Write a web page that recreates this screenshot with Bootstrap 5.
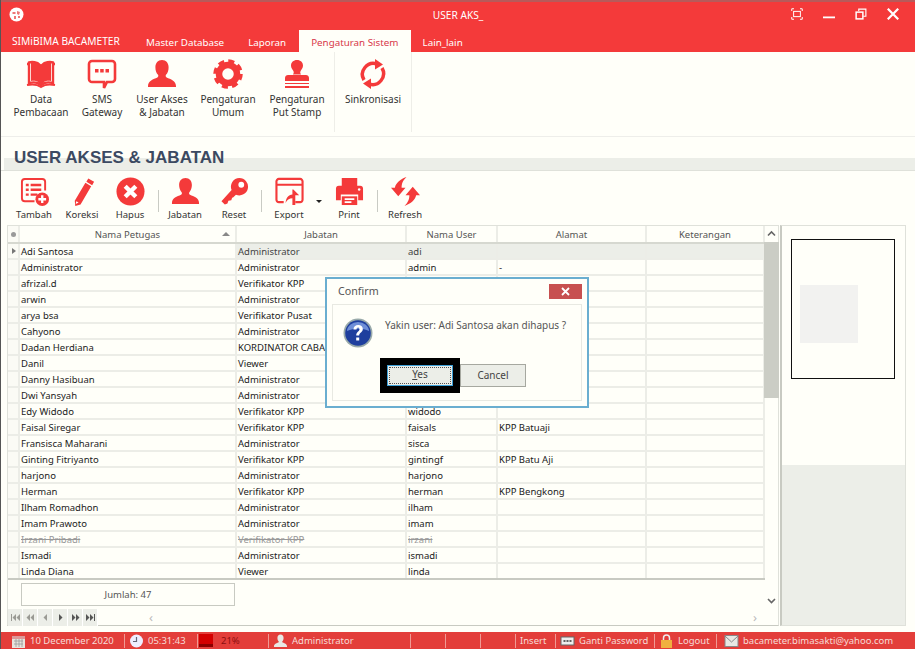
<!DOCTYPE html>
<html lang="en">
<head>
    <meta charset="UTF-8">
    <title>USER AKS_</title>
    <link href="https://cdn.jsdelivr.net/npm/bootstrap@5.3.2/dist/css/bootstrap.min.css" rel="stylesheet">
    <style>
        body { font-family: "Noto Sans", "Liberation Sans", sans-serif; font-size: 9.5px; color: #222; background: #fffff9; overflow: hidden; }
        .app { width: 915px; height: 649px; border-left: 1px solid #555; position: relative; }
        .ico { fill: #f43a3a; display: block; }
        /* title bar */
        .titlebar { height: 30px; background: #f43a3a; border-top: 2px solid #b85a5a; color: #fff; font-size: 10.2px; padding: 0 16px 4px 8px; }
        .win-title { position: absolute; left: 0; right: 0; top: 8px; text-align: center; }
        .winbtns { gap: 20px; }
        .winbtns svg { width: 12px; height: 12px; fill: none; stroke: #fff; }
        /* tabs */
        .tabstrip { height: 22px; background: #f43a3a; color: #fff; font-size: 9.8px; }
        .app-tab { width: 131px; padding: 4px 0 0 11px; height: 22px; font-size: 10.2px; }
        .rib-tab { padding: 6px 12px 0; height: 22px; }
        .rib-tab.first { margin-left: 2px; }
        .rib-tab.on { background: #fffff9; color: #d8384a; margin-left: 1px; }
        /* ribbon */
        .ribbon { height: 85px; border-bottom: 1px solid #eeeeea; }
        .rib-group { height: 80px; border-right: 1px solid #eeeee8; }
        .rib-main { width: 334px; }
        .rib-btn { width: 64px; padding-top: 7px; text-align: center; line-height: 13px; color: #333; font-size: 10px; }
        .rib-btn svg { width: 30px; height: 30px; margin: 0 auto 4px; }
        .rib-btn:nth-child(1) { width: 68px; margin-left: 6px; }
        .rib-btn:nth-child(2) { width: 54px; }
        .rib-btn:nth-child(3) { width: 66px; }
        .rib-btn:nth-child(4) { width: 66px; }
        .rib-btn:nth-child(5) { width: 72px; }
        .rib-btn.sync { width: 76px; margin-left: 0; }
        /* heading */
        .page-head { height: 33px; padding-top: 21px; position: relative; }
        .page-head-band { height: 12px; margin-left: 3px; background: #eceee8; }
        .page-head h1 { position: absolute; left: 13px; top: 11px; margin: 0; font: bold 17px "Liberation Sans", sans-serif; color: #3c4a62; }
        /* toolbar */
        .tools { height: 52px; padding: 6px 0 0 9px; border-top: 1px solid #dfe1da; }
        .tool { width: 48px; text-align: center; color: #333; line-height: 13px; }
        .tool svg { width: 29px; height: 29px; margin: 0 auto 2px; }
        .tool.t-jabatan { width: 52px; }
        .tool.t-reset { width: 46px; }
        .tool.t-export { width: 54px; }
        .tool.t-print { width: 54px; }
        .tool.t-refresh { width: 54px; }
        .tool-sep { width: 1px; height: 22px; background: #c9cbc4; margin: 13px 0 0 4px; }
        .tool-sep.tight { margin-left: 1px; }
        .tool-caret { width: 0; height: 0; border: 3px solid transparent; border-top-color: #222; border-bottom: 0; margin-top: 23px; }
        /* data grid */
        .work { height: 410px; padding: 3px 9px 6px 6px; }
        .grid-frame { width: 772px; border: 1px solid #dfe1da; border-bottom: 1px solid #c8cac2; }
        .grid-left { width: 756px; }
        .petugas { table-layout: fixed; width: 756px; margin: 0; border-collapse: collapse; }
        .petugas th, .petugas td { height: 16px; padding: 0 1px; font-weight: 400; white-space: nowrap; overflow: hidden; border-right: 2px solid #ecede7; border-bottom: 2px solid #ecede7; line-height: 13px; }
        .petugas th { height: 17px; text-align: center; color: #555; border-bottom: 2px solid #d6d8d0; position: relative; }
        .petugas tr:last-child td { border-bottom: 2px solid #c8cac2; }
        .petugas .c-sel { width: 11px; padding: 0; background: #fbfbf5; }
        .petugas .c-nama { width: 217px; }
        .petugas .c-jab { width: 170px; }
        .petugas .c-user { width: 91px; }
        .petugas .c-alamat { width: 149px; }
        .petugas .c-ket { width: 118px; }
        .petugas .cur td:not(.c-sel):not(:nth-child(2)) { background: #eceee8; color: #444; }
        .petugas .off td { color: #999; text-decoration: line-through; }
        .sort-up { position: absolute; right: 5px; top: 6px; width: 0; height: 0; border: 4px solid transparent; border-bottom: 4px solid #888; border-top: 0; }
        .sel-dot { width: 5px; height: 5px; border-radius: 50%; background: #999; margin: 0 auto; }
        .row-arrow { width: 0; height: 0; border: 3px solid transparent; border-left: 4px solid #777; border-right: 0; margin: 0 0 0 4px; }
        .sum-box { width: 214px; height: 23px; margin: 3px 0 0 13px; border: 1px solid #c8cac2; text-align: center; line-height: 21px; color: #555; }
        .pager { height: 17px; margin-top: 3px; }
        .pager-btn { width: 15px; height: 17px; background: #eceee8; border-right: 1px solid #fff; }
        .pager-btn svg { width: 15px; height: 17px; display: block; fill: #9a9a94; }
        .pager-btn.live svg { fill: #555; }
        .chev { color: #bbb; font-size: 13px; line-height: 15px; padding: 0 7px 0 51px; }
        .vbar { width: 15px; }
        .vbar-btn { height: 16px; }
        .vbar-btn svg, .vbar-low svg { width: 15px; height: 16px; display: block; fill: none; stroke: #666; stroke-width: 1.6; }
        .vbar-thumb { height: 156px; background: #cbcdc5; }
        .vbar-low { margin-top: 195px; }
        /* right side */
        .side-panel { width: 126px; margin-left: 1px; border: 1px solid #dfe1da; border-left: 2px solid #c8cac2; }
        .side-top { height: 239px; padding: 13px 0 0 9px; }
        .photo-box { width: 104px; height: 140px; border: 1px solid #111; padding: 45px 0 0 8px; }
        .photo-blank { width: 58px; height: 58px; background: #f2f2f0; }
        .side-low { background: #eceee8; }
        /* status bar */
        .statusbar { height: 17px; background: #e33e3a; color: #f6dcd8; display: grid; grid-template-columns: 124px 73px 71px 142px 35px 35px 35px 40px 99px 62px 1fr; }
        .stat { border-right: 1px solid #f09a94; height: 14px; margin-top: 2px; padding-left: 10px; line-height: 13px; gap: 4px; white-space: nowrap; }
        .stat:last-child { border: 0; padding-left: 7px; }
        .stat svg { width: 15px; height: 14px; flex: none; }
        .meter { width: 14px; height: 13px; background: #d40000; border-bottom: 3px solid #8c0000; margin-left: -9px; margin-right: 4px; }
        .meter-txt { color: #8c1010; }
        /* confirm dialog */
        .confirm { position: absolute; left: 324px; top: 277px; width: 264px; height: 131px; background: #fffff9; border: 2px solid #6aaed0; border-radius: 0; padding: 0 5px 5px 5px; }
        .confirm-head { height: 25px; padding-left: 6px; color: #555; font-size: 10.7px; }
        .confirm-x { width: 33px; height: 15px; margin-top: 5px; background: #c75050; }
        .confirm-x svg { width: 33px; height: 15px; display: block; stroke: #fff; stroke-width: 1.8; }
        .confirm-body { height: 98px; border: 1px solid #e8e9e2; position: relative; }
        .confirm-msg { padding: 13px 0 0 10px; gap: 12px; color: #555; font-size: 10px; }
        .confirm-msg svg { width: 30px; height: 30px; flex: none; }
        .confirm-btns { position: absolute; left: 47px; top: 53px; }
        .btn.btn-yes, .btn.btn-no { font-size: 10px; padding: 0; border-radius: 0; color: #444; background: #eceee8; line-height: 1; }
        .btn.btn-yes { width: 80px; height: 35px; border: 7px solid #000; outline: 0; position: relative; }
        .btn-yes span { display: block; margin: 0; height: 21px; line-height: 17px; border: 1px solid #3da0d8; outline: 1px dotted #555; outline-offset: -3px; }
        .btn.btn-no { width: 66px; height: 23px; margin-top: 6px; border: 1px solid #a6a8a0; }
    </style>
</head>
<body>
<svg width="0" height="0" class="position-absolute">
    <defs>
        <symbol id="i-user" viewBox="0 0 30 30"><path d="M15 1c4.200 0 6.600 3.200 6.600 7.400 0 3-1 5.600-2.600 7.400-.6.800-.4 2 .6 2.600 4 1.800 9.400 3 9.400 8.600v1H1v-1c0-5.600 5.400-6.800 9.400-8.600 1-.6 1.200-1.800.6-2.600-1.600-1.800-2.600-4.400-2.600-7.400C8.400 4.200 10.800 1 15 1z"/></symbol>
    </defs>
</svg>
<div class="app d-flex flex-column">
    <!-- title bar -->
    <div class="titlebar d-flex align-items-center justify-content-between">
        <svg width="15" height="15" viewBox="0 0 15 15"><circle cx="7.500" cy="7.500" r="7" fill="#fff"/><path d="M3.500 5h3v2h-3zM8 4l3 1-1 3-2-1zM5 9h2v3H5zM9 9h2v2H9z" fill="#e77"/></svg>
        <div class="win-title">USER AKS_</div>
        <div class="winbtns d-flex">
            <svg viewBox="0 0 16 16" stroke-width="1.300"><path d="M1 4V1h3M12 1h3v3M15 12v3h-3M4 15H1v-3"/><rect x="3.500" y="4.500" width="9" height="7"/></svg>
            <svg viewBox="0 0 16 16"><path d="M0 12.500h16" stroke-width="2.400"/></svg>
            <svg viewBox="0 0 16 16" stroke-width="1.500"><rect x="1.500" y="5.500" width="9" height="9" stroke-width="2"/><path d="M5 4V1.500h9.500V11H11"/></svg>
            <svg viewBox="0 0 16 16"><path d="M1 1l14 14M15 1L1 15" stroke-width="3"/></svg>
        </div>
    </div>
    <!-- tabs -->
    <div class="tabstrip d-flex">
        <div class="app-tab">SIMiBIMA BACAMETER</div>
        <div class="rib-tab first">Master Database</div>
        <div class="rib-tab">Laporan</div>
        <div class="rib-tab on">Pengaturan Sistem</div>
        <div class="rib-tab">Lain_lain</div>
    </div>
    <!-- ribbon -->
    <div class="ribbon d-flex">
        <div class="rib-group rib-main d-flex">
            <div class="rib-btn">
                <svg class="ico" viewBox="0 0 30 30"><path d="M1 5h2v19c4-1 8-1 11 1.500V6C11 3 6 2.500 3 3.500V5zM29 5h-2v19c-4-1-8-1-11 1.500V6c3-3 8-3.500 11-2.500V5z" fill="none" stroke="#f43a3a" stroke-width="2.400"/><path d="M5 3.500c3-.8 6 0 8 2v18c-2-1.600-5-2-8-1.500zM25 3.500c-3-.8-6 0-8 2v18c2-1.600 5-2 8-1.500z"/><path d="M1 26c5-1 10-1 14 2 4-3 9-3 14-2" fill="none" stroke="#f43a3a" stroke-width="2"/></svg>
                Data<br>Pembacaan
            </div>
            <div class="rib-btn">
                <svg class="ico" viewBox="0 0 30 30"><path d="M5 2h20a3 3 0 0 1 3 3v15a3 3 0 0 1-3 3h-5l-3 6v-6H5a3 3 0 0 1-3-3V5a3 3 0 0 1 3-3z" fill="none" stroke="#f43a3a" stroke-width="2.600"/><rect x="8" y="10" width="3.500" height="3.500"/><rect x="13.200" y="10" width="3.500" height="3.500"/><rect x="18.500" y="10" width="3.500" height="3.500"/></svg>
                SMS<br>Gateway
            </div>
            <div class="rib-btn">
                <svg class="ico"><use href="#i-user"/></svg>
                User Akses<br>&amp; Jabatan
            </div>
            <div class="rib-btn">
                <svg class="ico" viewBox="0 0 30 30"><circle cx="15" cy="15" r="9" fill="none" stroke="#f43a3a" stroke-width="6.500"/><circle cx="15" cy="15" r="12.500" fill="none" stroke="#f43a3a" stroke-width="4.500" stroke-dasharray="5.800 4"/></svg>
                Pengaturan<br>Umum
            </div>
            <div class="rib-btn">
                <svg class="ico" viewBox="0 0 30 30"><path d="M15 1c3.600 0 6 2.400 6 5.600 0 2.400-1.400 3.800-2.400 5.400-.6 1.200-.4 2.400.4 3.400h-8c.8-1 1-2.200.4-3.400C10.400 10.400 9 9 9 6.600 9 3.400 11.400 1 15 1z"/><path d="M3 19c0-2 1.500-3 3-3h18c1.500 0 3 1 3 3v3H3zM3 24h24v1H3zM3 27h24v2H3z"/></svg>
                Pengaturan<br>Put Stamp
            </div>
        </div>
        <div class="rib-group d-flex">
            <div class="rib-btn sync">
                <svg class="ico" viewBox="0 0 30 30"><path d="M6 21A11 11 0 0 1 19 5M24 9A11 11 0 0 1 11 25" fill="none" stroke="#f43a3a" stroke-width="3.500"/><path d="M17 0l8 5.500-8 5zM13 30l-8-5.500 8-5z"/></svg>
                Sinkronisasi
            </div>
        </div>
    </div>
    <!-- page heading -->
    <div class="page-head">
        <div class="page-head-band"></div>
        <h1>USER AKSES &amp; JABATAN</h1>
    </div>
    <!-- toolbar -->
    <div class="tools d-flex">
        <div class="tool">
            <svg class="ico" viewBox="0 0 30 30"><path d="M15 25H5a3 3 0 0 1-3-3V5a3 3 0 0 1 3-3h18a3 3 0 0 1 3 3v9" fill="none" stroke="#f43a3a" stroke-width="2"/><path d="M6 7h3v2.500H6zM11 7h11v2.500H11zM6 12h3v2.500H6zM11 12h11v2.500H11zM6 17h3v2.500H6zM11 17h7v2.500h-7z"/><circle cx="23" cy="23" r="7"/><path d="M23 19v8M19 23h8" stroke="#fff" stroke-width="2.400"/></svg>
            Tambah
        </div>
        <div class="tool">
            <svg class="ico" viewBox="0 0 30 30"><path d="M21 1.500l6 3.500-2 3.500-6-3.500zM18 6l6 3.500-11 19-5.500 1.500-.5-5.500z"/><path d="M8.500 25l2.500 1.500-3 1.500z" fill="#fff"/></svg>
            Koreksi
        </div>
        <div class="tool">
            <svg class="ico" viewBox="0 0 30 30"><circle cx="15" cy="15" r="14.500"/><path d="M9.500 9.500l11 11M20.500 9.500l-11 11" stroke="#fff" stroke-width="4.500"/></svg>
            Hapus
        </div>
        <div class="tool-sep"></div>
        <div class="tool t-jabatan">
            <svg class="ico"><use href="#i-user"/></svg>
            Jabatan
        </div>
        <div class="tool t-reset">
            <svg class="ico" viewBox="0 0 30 30"><path d="M20 1a9 9 0 1 1-3.500 17.300l-3 3-1 .1-.8 2.600-3 .5-1 3-2.700 1-3.500-3.500L12 13.500A9 9 0 0 1 20 1z"/><circle cx="22" cy="8" r="3" fill="#fff"/></svg>
            Reset
        </div>
        <div class="tool-sep"></div>
        <div class="tool t-export">
            <svg class="ico" viewBox="0 0 30 30"><path d="M9 26H4a2.500 2.500 0 0 1-2.500-2.500v-19A2.500 2.500 0 0 1 4 2h22a2.500 2.500 0 0 1 2.500 2.500v19A2.500 2.500 0 0 1 26 26h-5M2 8h26" fill="none" stroke="#f43a3a" stroke-width="2.200"/><path d="M19 13l6 6h-4v10h-3v-7c-3 0-6 2-7 5 0-5 3-9 7-9v-5z"/></svg>
            Export
        </div>
        <div class="tool-caret"></div>
        <div class="tool t-print">
            <svg class="ico" viewBox="0 0 30 30"><path d="M7 1h16v8H7zM4 9h22a3 3 0 0 1 3 3v12h-5v-6H6v6H1V12a3 3 0 0 1 3-3z"/><path d="M7 20h16v9H7z"/><path d="M10 23h10M10 26h7" stroke="#fff" stroke-width="1.800"/><circle cx="25" cy="13" r="1.300" fill="#fff"/></svg>
            Print
        </div>
        <div class="tool-sep tight"></div>
        <div class="tool t-refresh">
            <svg class="ico" viewBox="0 0 30 30"><path d="M16 0c-4 4-5 7-5 11h4l-7.500 9L0 11h4C5 6 10 2 16 0zM14 30c4-4 5-7 5-11h-4l7.500-9 7.500 9h-4c-1 5-6 9-12 11z"/></svg>
            Refresh
        </div>
    </div>
    <!-- grid and side panel -->
    <div class="work d-flex">
        <div class="grid-frame d-flex">
            <div class="grid-left d-flex flex-column">
                <table class="petugas">
                    <thead>
                        <tr><th class="c-sel"><div class="sel-dot"></div></th><th class="c-nama">Nama Petugas<span class="sort-up"></span></th><th class="c-jab">Jabatan</th><th class="c-user">Nama User</th><th class="c-alamat">Alamat</th><th class="c-ket">Keterangan</th></tr>
                    </thead>
                    <tbody>
                        <tr class="cur"><td class="c-sel"><div class="row-arrow"></div></td><td>Adi Santosa</td><td>Administrator</td><td>adi</td><td></td><td></td></tr>
                        <tr><td class="c-sel"></td><td>Administrator</td><td>Administrator</td><td>admin</td><td>-</td><td></td></tr>
                        <tr><td class="c-sel"></td><td>afrizal.d</td><td>Verifikator KPP</td><td></td><td></td><td></td></tr>
                        <tr><td class="c-sel"></td><td>arwin</td><td>Administrator</td><td></td><td></td><td></td></tr>
                        <tr><td class="c-sel"></td><td>arya bsa</td><td>Verifikator Pusat</td><td></td><td></td><td></td></tr>
                        <tr><td class="c-sel"></td><td>Cahyono</td><td>Administrator</td><td></td><td></td><td></td></tr>
                        <tr><td class="c-sel"></td><td>Dadan Herdiana</td><td>KORDINATOR CABANG</td><td></td><td></td><td></td></tr>
                        <tr><td class="c-sel"></td><td>Danil</td><td>Viewer</td><td></td><td></td><td></td></tr>
                        <tr><td class="c-sel"></td><td>Danny Hasibuan</td><td>Administrator</td><td></td><td></td><td></td></tr>
                        <tr><td class="c-sel"></td><td>Dwi Yansyah</td><td>Administrator</td><td></td><td></td><td></td></tr>
                        <tr><td class="c-sel"></td><td>Edy Widodo</td><td>Verifikator KPP</td><td>widodo</td><td></td><td></td></tr>
                        <tr><td class="c-sel"></td><td>Faisal Siregar</td><td>Verifikator KPP</td><td>faisals</td><td>KPP Batuaji</td><td></td></tr>
                        <tr><td class="c-sel"></td><td>Fransisca Maharani</td><td>Administrator</td><td>sisca</td><td></td><td></td></tr>
                        <tr><td class="c-sel"></td><td>Ginting Fitriyanto</td><td>Verifikator KPP</td><td>gintingf</td><td>KPP Batu Aji</td><td></td></tr>
                        <tr><td class="c-sel"></td><td>harjono</td><td>Administrator</td><td>harjono</td><td></td><td></td></tr>
                        <tr><td class="c-sel"></td><td>Herman</td><td>Verifikator KPP</td><td>herman</td><td>KPP Bengkong</td><td></td></tr>
                        <tr><td class="c-sel"></td><td>Ilham Romadhon</td><td>Administrator</td><td>ilham</td><td></td><td></td></tr>
                        <tr><td class="c-sel"></td><td>Imam Prawoto</td><td>Administrator</td><td>imam</td><td></td><td></td></tr>
                        <tr class="off"><td class="c-sel"></td><td>Irzani Pribadi</td><td>Verifikator KPP</td><td>irzani</td><td></td><td></td></tr>
                        <tr><td class="c-sel"></td><td>Ismadi</td><td>Administrator</td><td>ismadi</td><td></td><td></td></tr>
                        <tr><td class="c-sel"></td><td>Linda Diana</td><td>Viewer</td><td>linda</td><td></td><td></td></tr>
                    </tbody>
                </table>
                <div class="sum-box">Jumlah: 47</div>
                <div class="pager d-flex align-items-center">
                    <div class="pager-btn"><svg viewBox="0 0 15 17"><path d="M3 5h1v7H3zM8 5v7L4.500 8.500zM12 5v7L8.500 8.500z"/></svg></div>
                    <div class="pager-btn"><svg viewBox="0 0 15 17"><path d="M7 5v7L3.500 8.500zM11 5v7L7.500 8.500z"/></svg></div>
                    <div class="pager-btn"><svg viewBox="0 0 15 17"><path d="M9 5v7L5.500 8.500z"/></svg></div>
                    <div class="pager-btn live"><svg viewBox="0 0 15 17"><path d="M6 5v7l3.500-3.500z"/></svg></div>
                    <div class="pager-btn live"><svg viewBox="0 0 15 17"><path d="M4 5v7l3.500-3.500zM8 5v7l3.500-3.500z"/></svg></div>
                    <div class="pager-btn live"><svg viewBox="0 0 15 17"><path d="M3 5v7l3.500-3.500zM7 5v7l3.500-3.500zM11 5h1v7h-1z"/></svg></div>
                    <div class="chev flex-grow-1 d-flex justify-content-between"><span>&lsaquo;</span><span>&rsaquo;</span></div>
                </div>
            </div>
            <div class="vbar">
                <div class="vbar-btn"><svg viewBox="0 0 15 16"><path d="M4 9.500l3.500-3.500L11 9.500"/></svg></div>
                <div class="vbar-thumb"></div>
                <div class="vbar-low"><svg viewBox="0 0 15 16"><path d="M4 6l3.500 3.500L11 6"/></svg></div>
            </div>
        </div>
        <div class="side-panel d-flex flex-column">
            <div class="side-top">
                <div class="photo-box"><div class="photo-blank"></div></div>
            </div>
            <div class="side-low flex-grow-1"></div>
        </div>
    </div>
    <!-- status bar -->
    <div class="statusbar">
        <div class="stat d-flex">
            <svg viewBox="0 0 15 14"><rect x="1" y="2" width="13" height="12" fill="#e8e4dc"/><rect x="1" y="2" width="13" height="3" fill="#d99"/><path d="M3 7h9M3 10h9M5 5v8M8 5v8M11 5v8" stroke="#999" stroke-width=".8"/></svg>
            <span>10 December 2020</span>
        </div>
        <div class="stat d-flex ps-1">
            <svg viewBox="0 0 15 14"><circle cx="7.500" cy="7" r="6.500" fill="#eef"/><path d="M7.500 3v4.500H4" fill="none" stroke="#667" stroke-width="1.200"/></svg>
            <span>05:31:43</span>
        </div>
        <div class="stat d-flex">
            <div class="meter"></div>
            <span class="meter-txt">21%</span>
        </div>
        <div class="stat d-flex ps-1">
            <svg viewBox="0 0 30 30" fill="#e8e8e4"><use href="#i-user"/></svg>
            <span>Administrator</span>
        </div>
        <div class="stat"></div>
        <div class="stat"></div>
        <div class="stat"></div>
        <div class="stat ps-1">Insert</div>
        <div class="stat d-flex ps-1">
            <svg viewBox="0 0 15 14"><rect x="1" y="3" width="13" height="8" fill="#eee" stroke="#666"/><path d="M3.500 7h2M6.500 7h2M9.500 7h2" stroke="#333" stroke-width="1.500"/></svg>
            <span>Ganti Password</span>
        </div>
        <div class="stat d-flex ps-1">
            <svg viewBox="0 0 15 14"><path d="M4.500 6V4a3 3 0 0 1 6 0v2" fill="none" stroke="#eee" stroke-width="1.500"/><rect x="2" y="6" width="11" height="8" fill="#f0b040"/></svg>
            <span>Logout</span>
        </div>
        <div class="stat d-flex">
            <svg viewBox="0 0 15 14"><rect x="1" y="1.500" width="13" height="11" fill="#e8e8e4" stroke="#888"/><path d="M1 2l6.500 6L14 2" fill="none" stroke="#888"/></svg>
            <span>bacameter.bimasakti@yahoo.com</span>
        </div>
    </div>
    <!-- confirm dialog -->
    <div class="confirm card">
        <div class="confirm-head d-flex justify-content-between align-items-start">
            <span class="pt-1">Confirm</span>
            <div class="confirm-x"><svg viewBox="0 0 33 15"><path d="M13 4l7 7M20 4l-7 7"/></svg></div>
        </div>
        <div class="confirm-body">
            <div class="confirm-msg d-flex">
                <svg viewBox="0 0 30 30"><circle cx="15" cy="15" r="14.500" fill="#9aa"/><circle cx="15" cy="15" r="12.800" fill="#1f3f9e"/><path d="M4 13a11 9 0 0 1 22 0c-6-3-15-3-22 0z" fill="#6f8fd8"/><path d="M10.500 11.500c0-3 2-4.500 4.700-4.500s4.600 1.500 4.600 4c0 3.500-3.600 3.500-3.600 6.500h-3c0-4 3.300-4 3.300-6.300 0-1-.8-1.600-1.500-1.600-1 0-1.500.8-1.500 1.900zM13.200 19.500h3v3h-3z" fill="#fff"/></svg>
                <span>Yakin user: Adi Santosa akan dihapus ?</span>
            </div>
            <div class="confirm-btns d-flex align-items-start">
                <button type="button" class="btn btn-yes"><span><u>Y</u>es</span></button>
                <button type="button" class="btn btn-no">Cancel</button>
            </div>
        </div>
    </div>
</div>
<script src="https://cdn.jsdelivr.net/npm/bootstrap@5.3.2/dist/js/bootstrap.bundle.min.js"></script>
</body>
</html>
